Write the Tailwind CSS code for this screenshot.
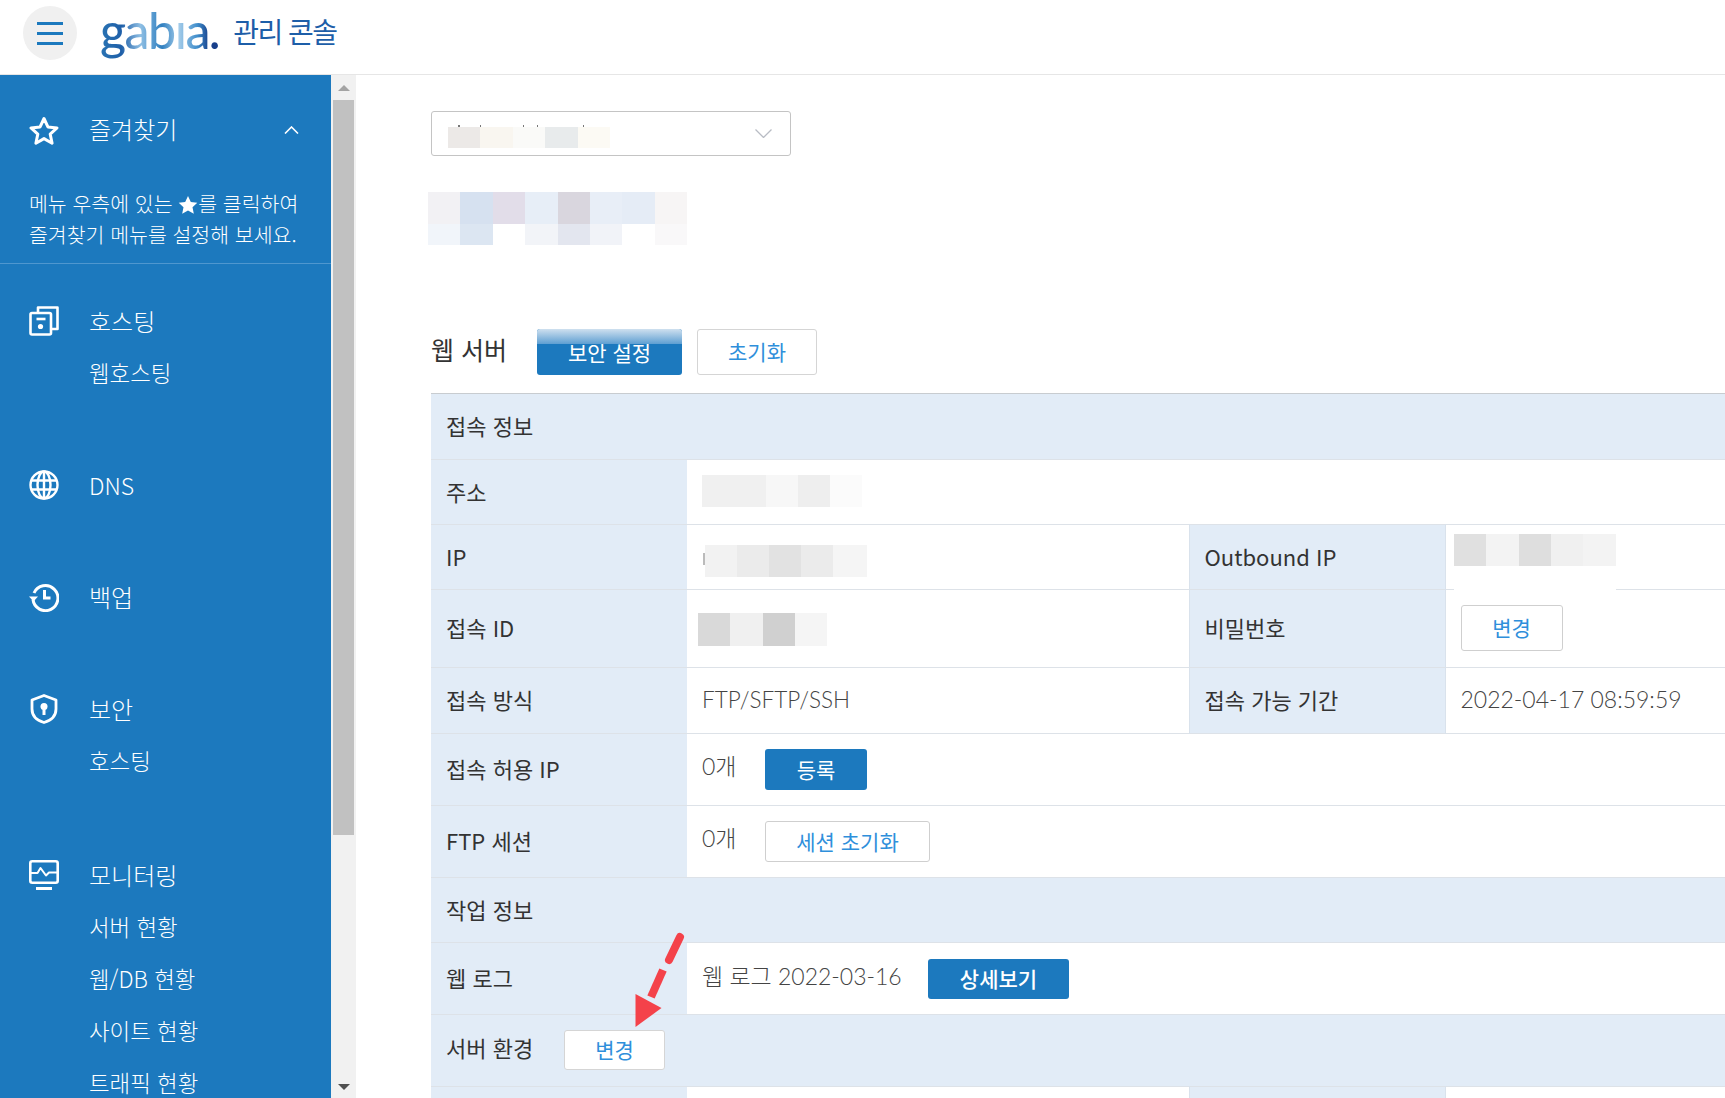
<!DOCTYPE html>
<html lang="ko">
<head>
  <meta charset="UTF-8" />
  <title>gabia 관리 콘솔</title>
  <script src="https://cdn.jsdelivr.net/npm/@tailwindcss/browser@4"></script>
</head>
<body class="h-[1098px] overflow-hidden bg-white font-['Noto_Sans_CJK_KR','Noto_Sans',sans-serif] text-[#333]">
  <!-- Top bar -->
  <header class="flex h-[75px] items-start border-b border-[#e6e6e6] pl-[23px]">
    <button class="mt-[6px] flex h-[54px] w-[54px] flex-col items-center justify-center gap-[7px] rounded-full bg-[#f0f0f0]">
      <span class="h-[3px] w-[26px] bg-[#1c79be]"></span>
      <span class="h-[3px] w-[26px] bg-[#1c79be]"></span>
      <span class="h-[3px] w-[26px] bg-[#1c79be]"></span>
    </button>
    <span class="ml-[23px] mt-[-2px] bg-[linear-gradient(90deg,#2a74b4_0%,#1f5fa8_18%,#8fbfe4_34%,#2f7fc0_52%,#a5cdea_66%,#3f8dcb_82%,#173f8a_92%)] bg-clip-text font-['Lato'] text-[50px] leading-[64px] font-medium tracking-[-1.5px] text-transparent">gabıa.</span>
    <span class="ml-[14px] mt-[12px] text-[28px] leading-[38px] tracking-[-1.5px] text-[#1d5ea8]">관리 콘솔</span>
  </header>

  <div class="flex h-[1023px]">
    <!-- Sidebar -->
    <nav class="w-[331px] shrink-0 overflow-hidden bg-[#1c79be] pt-[29px] font-light text-white">
      <div class="flex h-[52px] items-center pl-[29px] pr-[32px]">
        <svg class="mt-[2px] h-[30px] w-[30px] shrink-0" viewBox="0 0 30 30" fill="none" stroke="#fff" stroke-width="3" stroke-linejoin="round"><path d="M15 2.500l3.900 8.400 9.100 1-6.800 6.200 1.900 9.100L15 22.600l-8.100 4.600 1.900-9.100L2 11.900l9.100-1z"/></svg>
        <span class="ml-[30px] mt-[-2px] text-[24px]">즐겨찾기</span>
        <svg class="ml-auto h-[8px] w-[15px]" viewBox="0 0 15 8" fill="none" stroke="#fff" stroke-width="1.6"><path d="M1 7.500L7.500 1 14 7.500"/></svg>
      </div>
      <p class="mt-[32px] border-b border-[#4f97cf] pb-[13px] pl-[29px] text-[20.5px] leading-[31px]">메뉴 우측에 있는 <svg class="inline-block h-[20px] w-[20px] align-[-3px]" viewBox="0 0 20 20" fill="#fff"><path d="M10 1l2.800 6 6.500.8-4.800 4.400 1.300 6.500L10 15.400l-5.800 3.300 1.300-6.500L.7 7.800 7.200 7z"/></svg>를 클릭하여<br />즐겨찾기 메뉴를 설정해 보세요.</p>

      <div class="mt-[31px]">
        <div class="flex h-[52px] items-center pl-[29px]">
          <svg class="h-[30px] w-[30px] shrink-0" viewBox="0 0 30 30" fill="none" stroke="#fff" stroke-width="2.6" stroke-linejoin="round"><path d="M9 7V1.500h19.500V23H22"/><rect x="1.500" y="7" width="20.500" height="21.500" rx="1.500"/><path d="M7.500 13h9"/><circle cx="11.500" cy="20.500" r="2.600" fill="#fff" stroke="none"/></svg>
          <span class="ml-[30px] text-[24px]">호스팅</span>
        </div>
        <div class="flex h-[52px] items-center pl-[89px] text-[22.4px]">웹호스팅</div>
      </div>

      <div class="mt-[60px] flex h-[52px] items-center pl-[29px]">
        <svg class="h-[30px] w-[30px] shrink-0" viewBox="0 0 30 30" fill="none" stroke="#fff" stroke-width="2.400"><circle cx="15" cy="15" r="13.500"/><ellipse cx="15" cy="15" rx="6.500" ry="13.500"/><path d="M15 1.500v27M2 10.500h26M2 19.500h26"/></svg>
        <span class="ml-[30px] text-[23px]">DNS</span>
      </div>

      <div class="mt-[60px] flex h-[52px] items-center pl-[29px]">
        <svg class="h-[30px] w-[30px] shrink-0" viewBox="0 0 30 30" fill="none" stroke="#fff" stroke-width="3"><path d="M5 11a12.500 12.500 0 1 1-1 6.500"/><path d="M0 14.500h9l-4.500 5z" fill="#fff" stroke="none"/><path d="M15.500 8v8h6"/></svg>
        <span class="ml-[30px] text-[24px]">백업</span>
      </div>

      <div class="mt-[60px]">
        <div class="flex h-[52px] items-center pl-[29px]">
          <svg class="h-[30px] w-[30px] shrink-0" viewBox="0 0 30 30" fill="none" stroke="#fff" stroke-width="2.800" stroke-linejoin="round"><path d="M15 1.500l12 4.500v9c0 7-5 11.500-12 13.500C8 26.500 3 22 3 15V6z"/><circle cx="15" cy="12.500" r="3.500" fill="#fff" stroke="none"/><path d="M15 13v8" stroke-width="3"/></svg>
          <span class="ml-[30px] text-[24px]">보안</span>
        </div>
        <div class="flex h-[52px] items-center pl-[89px] text-[22.4px]">호스팅</div>
      </div>

      <div class="mt-[62px]">
        <div class="flex h-[52px] items-center pl-[29px]">
          <svg class="h-[30px] w-[30px] shrink-0" viewBox="0 0 30 30" fill="none" stroke="#fff" stroke-width="2.600" stroke-linejoin="round"><rect x="1.300" y="1.300" width="27.400" height="21.400" rx="2"/><path d="M2 13h6.500l3-5 5.500 7.500 3-3H28" stroke-width="2"/><path d="M7 28.500h16" stroke-width="3"/></svg>
          <span class="ml-[30px] text-[24px]">모니터링</span>
        </div>
        <div class="flex h-[52px] items-center pl-[89px] text-[22.4px]">서버 현황</div>
        <div class="flex h-[52px] items-center pl-[89px] text-[22.4px]">웹/DB 현황</div>
        <div class="flex h-[52px] items-center pl-[89px] text-[22.4px]">사이트 현황</div>
        <div class="flex h-[52px] items-center pl-[89px] text-[22.4px]">트래픽 현황</div>
      </div>
    </nav>

    <!-- Sidebar scrollbar -->
    <div class="flex w-[25px] shrink-0 flex-col items-center bg-[#f1f1f1]">
      <div class="flex h-[25px] items-center justify-center">
        <span class="h-0 w-0 border-x-[6px] border-b-[6px] border-x-transparent border-b-[#a3a3a3]"></span>
      </div>
      <div class="h-[735px] w-[21px] bg-[#c1c1c1]"></div>
      <div class="mt-auto flex h-[14px] items-start justify-center">
        <span class="h-0 w-0 border-x-[6px] border-t-[6px] border-x-transparent border-t-[#505050]"></span>
      </div>
    </div>

    <!-- Content -->
    <main class="relative min-w-0 flex-1 overflow-hidden pl-[75px] pt-[36px]">
      <div class="flex h-[45px] w-[360px] items-center justify-between rounded-[3px] border border-[#c4c4c4] pl-[16px] pr-[18px]">
        <div class="relative mt-[7px] flex h-[21px]">
          <!-- tops of the letters that stick out above the blur -->
          <span class="absolute left-[10px] top-[-2px] h-[2px] w-[2px] bg-[#777]"></span>
          <span class="absolute left-[32px] top-[-2px] h-[2px] w-[1px] bg-[#777]"></span>
          <span class="absolute left-[75px] top-[-2px] h-[2px] w-[1px] bg-[#777]"></span>
          <span class="absolute left-[89px] top-[-2px] h-[2px] w-[1px] bg-[#777]"></span>
          <span class="absolute left-[135px] top-[-2px] h-[2px] w-[1px] bg-[#777]"></span>
          <span class="w-[32.4px] bg-[#ece9e7]"></span>
          <span class="w-[32.4px] bg-[#f9f6f0]"></span>
          <span class="w-[32.4px] bg-[#fafaf8]"></span>
          <span class="w-[32.4px] bg-[#e8ebec]"></span>
          <span class="w-[32.4px] bg-[#fcfaf4]"></span>
        </div>
        <svg class="h-[9px] w-[17px]" viewBox="0 0 17 9" fill="none" stroke="#b8bcc4" stroke-width="1.300"><path d="M.5.500l8 8 8-8"/></svg>
      </div>

      <div class="ml-[-3px] mt-[36px] w-[259px]">
        <div class="flex h-[32px]">
          <span class="w-[32.4px] bg-[#f2f1f4]"></span>
          <span class="w-[32.4px] bg-[#d6e1f0]"></span>
          <span class="w-[32.4px] bg-[#e2dde9]"></span>
          <span class="w-[32.4px] bg-[#e7eef7]"></span>
          <span class="w-[32.4px] bg-[#d9d6de]"></span>
          <span class="w-[32.4px] bg-[#e8eef7]"></span>
          <span class="w-[32.4px] bg-[#e5ecf6]"></span>
          <span class="w-[32.4px] bg-[#f7f5f5]"></span>
        </div>
        <div class="flex h-[21px]">
          <span class="w-[32.4px] bg-[#f1f5fa]"></span>
          <span class="w-[32.4px] bg-[#dce6f2]"></span>
          <span class="w-[32.4px] bg-white"></span>
          <span class="w-[32.4px] bg-[#f2f4f8]"></span>
          <span class="w-[32.4px] bg-[#e3e6ef]"></span>
          <span class="w-[32.4px] bg-[#f1f3f8]"></span>
          <span class="w-[32.4px] bg-white"></span>
          <span class="w-[32.4px] bg-[#f9f8f9]"></span>
        </div>
      </div>

      <!-- Web server heading -->
      <div class="mt-[84px] flex items-start">
        <h2 class="w-[106px] text-[25px] leading-[40px] font-normal text-[#333]">웹 서버</h2>
        <button class="relative h-[46px] w-[145px] overflow-hidden rounded-[3px] bg-[#1c79be] text-[21px] leading-[36px] text-white">보안 설정
          <span class="absolute inset-x-0 top-0 h-[15px] bg-[linear-gradient(180deg,#cfe0ef,#5e9fd2)]"></span>
        </button>
        <button class="ml-[15px] h-[46px] w-[120px] rounded-[3px] border border-[#d5d5d5] text-[21px] text-[#2f8fdb]">초기화</button>
      </div>

      <!-- Info table -->
      <table class="mt-[18px] w-[1294px] table-fixed border-t border-[#c8ccd0] text-[22px] [&_th]:pb-[2px]">
        <colgroup>
          <col class="w-[256px]" /><col class="w-[502px]" /><col class="w-[256px]" /><col class="w-[280px]" />
        </colgroup>
        <tbody>
          <tr class="h-[66px] border-b border-[#dde2e8] bg-[#e2ecf7]">
            <th colspan="4" class="pl-[15px] text-left font-normal">접속 정보</th>
          </tr>
          <tr class="h-[65px] border-b border-[#dde2e8]">
            <th class="bg-[#e2ecf7] pl-[15px] text-left font-normal">주소</th>
            <td colspan="3" class="pl-[15px]">
              <div class="mt-[-2px] flex h-[32px] w-[160px]">
                <span class="w-[64px] bg-[#f0f0f0]"></span>
                <span class="w-[32px] bg-[#f7f7f7]"></span>
                <span class="w-[32px] bg-[#eeeeee]"></span>
                <span class="w-[32px] bg-[#fbfbfb]"></span>
              </div>
            </td>
          </tr>
          <tr class="h-[65px] border-b border-[#dde2e8]">
            <th class="bg-[#e2ecf7] pl-[15px] text-left font-normal">IP</th>
            <td class="pl-[16px]">
              <div class="mt-[7px] flex h-[32px] w-[164px] items-center">
                <span class="mb-[4px] h-[12px] w-[2px] bg-[#bbb]"></span>
                <span class="h-[32px] w-[32px] bg-[#f2f2f2]"></span>
                <span class="h-[32px] w-[32px] bg-[#ebebeb]"></span>
                <span class="h-[32px] w-[32px] bg-[#e2e2e2]"></span>
                <span class="h-[32px] w-[32px] bg-[#ebebeb]"></span>
                <span class="h-[32px] w-[34px] bg-[#f5f5f5]"></span>
              </div>
            </td>
            <th class="border-x border-[#d9e2ec] bg-[#e2ecf7] pl-[15px] text-left font-normal">Outbound IP</th>
            <td class="relative pl-[8px]">
              <!-- white patch of the redaction covers the row line -->
              <div class="absolute left-[8px] top-[9px] w-[162px]">
                <div class="flex h-[32px]">
                  <span class="w-[32px] bg-[#e0e0e0]"></span>
                  <span class="w-[33px] bg-[#f3f3f3]"></span>
                  <span class="w-[32px] bg-[#dedede]"></span>
                  <span class="w-[32px] bg-[#f0f0f0]"></span>
                  <span class="w-[33px] bg-[#f3f3f3]"></span>
                </div>
                <div class="h-[25px] bg-white"></div>
              </div>
            </td>
          </tr>
          <tr class="h-[78px] border-b border-[#dde2e8]">
            <th class="bg-[#e2ecf7] pl-[15px] text-left font-normal">접속 ID</th>
            <td class="pl-[11px]">
              <div class="mt-[2px] flex h-[33px] w-[129px]">
                <span class="w-[32px] bg-[#d9d9d9]"></span>
                <span class="w-[33px] bg-[#f0f0f0]"></span>
                <span class="w-[32px] bg-[#d0d0d0]"></span>
                <span class="w-[32px] bg-[#f5f5f5]"></span>
              </div>
            </td>
            <th class="border-x border-[#d9e2ec] bg-[#e2ecf7] pl-[15px] text-left font-normal">비밀번호</th>
            <td class="pl-[15px]">
              <button class="mt-[-2px] h-[46px] w-[102px] rounded-[3px] border border-[#cfcfcf] text-[21px] text-[#2f8fdb]">변경</button>
            </td>
          </tr>
          <tr class="h-[66px] border-b border-[#dde2e8]">
            <th class="bg-[#e2ecf7] pl-[15px] text-left font-normal">접속 방식</th>
            <td class="pb-[2px] pl-[15px] font-['Lato','Noto_Sans_CJK_KR',sans-serif] text-[22.5px] font-light text-[#444]">FTP/SFTP/SSH</td>
            <th class="border-x border-[#d9e2ec] bg-[#e2ecf7] pl-[15px] text-left font-normal">접속 가능 기간</th>
            <td class="pb-[2px] pl-[15px] font-['Lato','Noto_Sans_CJK_KR',sans-serif] text-[23px] font-light text-[#444]">2022-04-17 08:59:59</td>
          </tr>
          <tr class="h-[72px] border-b border-[#dde2e8]">
            <th class="bg-[#e2ecf7] pl-[15px] text-left font-normal">접속 허용 IP</th>
            <td colspan="3" class="pl-[15px]">
              <div class="flex items-center font-['Lato','Noto_Sans_CJK_KR',sans-serif] text-[23px] font-light text-[#444]">
                <span class="mt-[-6px] w-[63px]">0개</span>
                <button class="h-[41px] w-[102px] rounded-[3px] bg-[#1c79be] font-['Noto_Sans_CJK_KR'] text-[21px] font-normal text-white">등록</button>
              </div>
            </td>
          </tr>
          <tr class="h-[72px] border-b border-[#dde2e8]">
            <th class="bg-[#e2ecf7] pl-[15px] text-left font-normal">FTP 세션</th>
            <td colspan="3" class="pl-[15px]">
              <div class="flex items-center font-['Lato','Noto_Sans_CJK_KR',sans-serif] text-[23px] font-light text-[#444]">
                <span class="mt-[-6px] w-[63px]">0개</span>
                <button class="h-[41px] w-[165px] rounded-[3px] border border-[#cfcfcf] font-['Noto_Sans_CJK_KR'] text-[21px] font-normal text-[#2f8fdb]">세션 초기화</button>
              </div>
            </td>
          </tr>
          <tr class="h-[65px] border-b border-[#dde2e8] bg-[#e2ecf7]">
            <th colspan="4" class="pl-[15px] text-left font-normal">작업 정보</th>
          </tr>
          <tr class="h-[72px] border-b border-[#dde2e8]">
            <th class="bg-[#e2ecf7] pl-[15px] text-left font-normal">웹 로그</th>
            <td colspan="3" class="pl-[15px]">
              <div class="flex items-center font-['Lato','Noto_Sans_CJK_KR',sans-serif] text-[23px] font-light text-[#444]">
                <span class="mt-[-4px] w-[226px]">웹 로그 2022-03-16</span>
                <button class="h-[40px] w-[141px] rounded-[3px] bg-[#1c79be] font-['Noto_Sans_CJK_KR'] text-[21px] font-medium text-white">상세보기</button>
              </div>
            </td>
          </tr>
          <tr class="h-[72px] border-b border-[#dde2e8] bg-[#e2ecf7]">
            <th colspan="4" class="pl-[15px] text-left font-normal">
              <div class="flex items-center">
                <span class="mt-[-5px] w-[118px]">서버 환경</span>
                <button class="h-[40px] w-[101px] rounded-[3px] border border-[#d5d5d5] bg-white text-[21px] font-normal text-[#2f8fdb]">변경</button>
              </div>
            </th>
          </tr>
          <tr class="h-[50px]">
            <th class="bg-[#e2ecf7]"></th>
            <td></td>
            <th class="border-x border-[#d9e2ec] bg-[#e2ecf7]"></th>
            <td></td>
          </tr>
        </tbody>
      </table>

      <!-- Annotation arrow pointing at the 변경 button -->
      <svg class="absolute left-[269px] top-[850px] h-[110px] w-[60px]" viewBox="0 0 60 110" fill="none">
        <path d="M55 12L44 35" stroke="#f4424a" stroke-width="8" stroke-linecap="round"/>
        <path d="M38 45L26 72" stroke="#f4424a" stroke-width="8"/>
        <path d="M10.500 69L36.500 83L10.500 102z" fill="#f4424a"/>
      </svg>
    </main>
  </div>
</body>
</html>
